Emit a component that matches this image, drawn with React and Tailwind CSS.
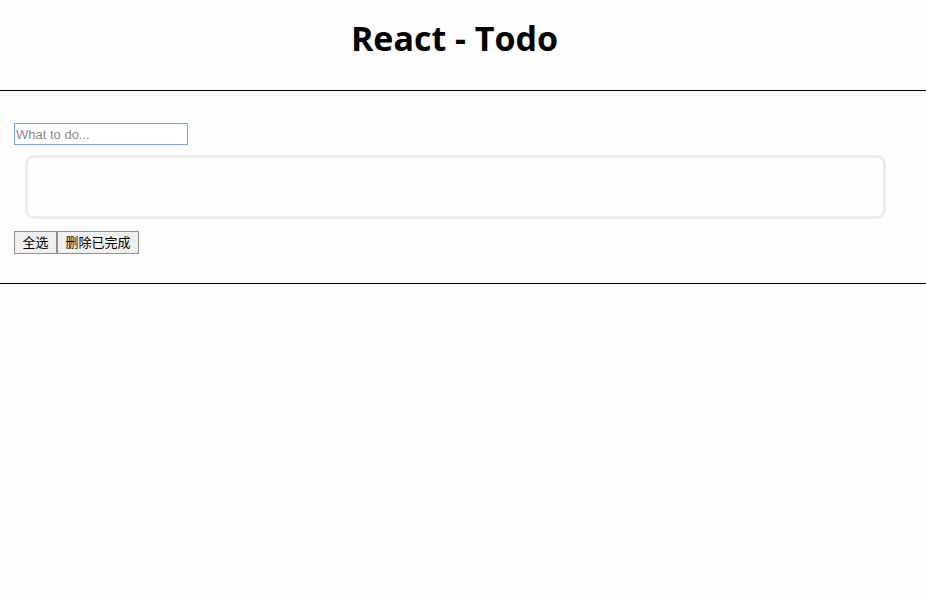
export default function App() {
  return (
    <div className="min-h-[595px] bg-[#fdfdfd] text-black" style={{ fontFamily: '"Liberation Sans", Arial, "Noto Sans CJK SC", sans-serif' }}>
      <div className="h-[91px] border-b border-black flex justify-center pt-[14px] pr-[17px]">
        <h1 className="text-[34px] font-bold leading-[48px] m-0" style={{ fontFamily: '"Open Sans", "Noto Sans", sans-serif' }}>React - Todo</h1>
      </div>
      <div className="border-b border-black pt-[32px] pb-[29px] px-[14px]">
        <input
          type="text"
          placeholder="What to do..."
          className="block w-[174px] h-[22px] border border-[#7ba2e6] bg-white px-[1px] text-[13px] placeholder:text-[#8a8a8a] outline-none"
        />
        <div className="mt-[10px] ml-[11px] w-[861px] h-[64px] border-[3px] border-[#ebebeb] rounded-[9px]"></div>
        <div className="mt-[12px] flex">
          <button className="h-[23px] w-[43px] border border-[#8f8f8f] bg-[#efefef] text-[13px] leading-none px-0">全选</button>
          <button className="h-[23px] w-[82px] border border-[#8f8f8f] bg-[#efefef] text-[13px] leading-none px-0">删除已完成</button>
        </div>
      </div>
    </div>
  );
}
